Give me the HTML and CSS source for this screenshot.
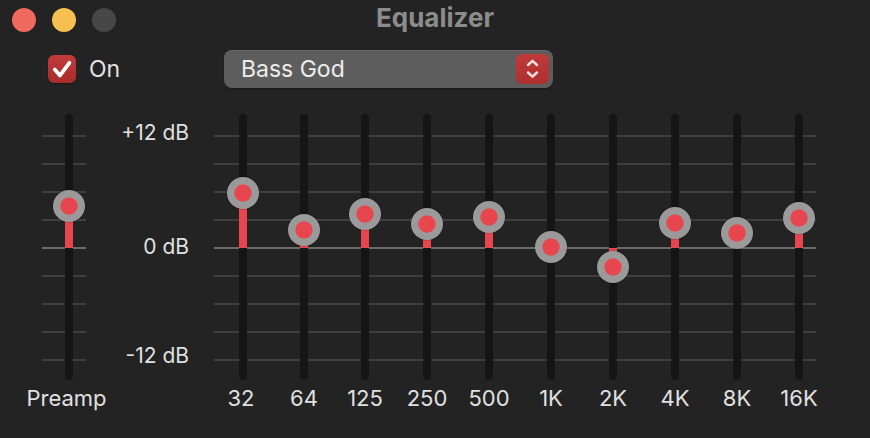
FILE: index.html
```html
<!DOCTYPE html>
<html lang="en">
<head>
<meta charset="utf-8">
<title>Equalizer</title>
<link rel="stylesheet" href="styles.css">
</head>
<body>
<div class="window">
  <header class="titlebar">
    <div class="lights">
      <span class="light close"></span>
      <span class="light min"></span>
      <span class="light zoom"></span>
    </div>
    <div class="title">Equalizer</div>
    <div class="spacer"></div>
  </header>

  <div class="controls">
    <label class="toggle">
      <span class="check">
        <svg width="28" height="28" viewBox="0 0 28 28"><path d="M6.8 14.6 L12 20.4 L21.4 7.8" fill="none" stroke="#fff" stroke-width="3.8" stroke-linecap="round" stroke-linejoin="round"/></svg>
      </span>
      <span>On</span>
    </label>
    <div class="popup">
      <span class="preset">Bass God</span>
      <span class="stepper">
        <svg width="33" height="30" viewBox="0 0 33 30"><path d="M12 11 L16.5 6.8 L21 11 M12 18.5 L16.5 22.7 L21 18.5" fill="none" stroke="#f4e2e2" stroke-width="2.4" stroke-linecap="round" stroke-linejoin="round"/></svg>
      </span>
    </div>
  </div>

  <div class="eq">
    <div class="band preamp">
      <div class="slider" style="--db:4.45"><div class="fill"></div><div class="knob"></div></div>
      <div class="label">Preamp</div>
    </div>
    <div class="scale">
      <span class="db top">+12 dB</span>
      <span class="db mid">0 dB</span>
      <span class="db bot">-12 dB</span>
    </div>
    <div class="bands">
      <div class="band first"><div class="slider" style="--db:5.9"><div class="fill"></div><div class="knob"></div></div><div class="label">32</div></div>
      <div class="band second"><div class="slider" style="--db:1.93"><div class="fill"></div><div class="knob"></div></div><div class="label">64</div></div>
      <div class="band"><div class="slider" style="--db:3.64"><div class="fill"></div><div class="knob"></div></div><div class="label">125</div></div>
      <div class="band"><div class="slider" style="--db:2.57"><div class="fill"></div><div class="knob"></div></div><div class="label">250</div></div>
      <div class="band"><div class="slider" style="--db:3.27"><div class="fill"></div><div class="knob"></div></div><div class="label">500</div></div>
      <div class="band"><div class="slider" style="--db:0.16"><div class="fill"></div><div class="knob"></div></div><div class="label">1K</div></div>
      <div class="band"><div class="slider" style="--db:-2.04"><div class="fill"></div><div class="knob"></div></div><div class="label">2K</div></div>
      <div class="band"><div class="slider" style="--db:2.68"><div class="fill"></div><div class="knob"></div></div><div class="label">4K</div></div>
      <div class="band"><div class="slider" style="--db:1.61"><div class="fill"></div><div class="knob"></div></div><div class="label">8K</div></div>
      <div class="band"><div class="slider" style="--db:3.21"><div class="fill"></div><div class="knob"></div></div><div class="label">16K</div></div>
    </div>
  </div>
</div>
</body>
</html>
```

FILE: styles.css
```css
* { box-sizing: border-box; }
html, body { margin: 0; padding: 0; }
body {
  background: #232323;
  font-family: Inter, "Noto Sans", sans-serif;
  color: #e0e0e0;
}
.window {
  width: 870px;
  height: 438px;
  background: #232323;
  overflow: hidden;
}

/* title bar */
.titlebar {
  height: 40px;
  display: grid;
  grid-template-columns: 1fr auto 1fr;
  align-items: center;
  padding: 0 12px;
}
.lights { display: flex; gap: 16px; }
.light { width: 24px; height: 24px; border-radius: 50%; }
.close { background: #ee6a5f; }
.min { background: #f5c04f; }
.zoom { background: #474747; }
.title {
  font-size: 26px;
  font-weight: 700;
  color: #8c8c8c;
  line-height: 36px;
  margin-top: -4px;
}

/* controls row */
.controls {
  display: flex;
  align-items: center;
  height: 38px;
  margin-top: 10px;
  padding-left: 48px;
}
.toggle {
  display: flex;
  align-items: center;
  gap: 13px;
  width: 176px;
  font-size: 23px;
  color: #e2e2e2;
}
.check {
  width: 28px;
  height: 28px;
  border-radius: 6px;
  background: linear-gradient(#c23b3b, #a82c2d);
  box-shadow: 0 1px 1px rgba(0,0,0,0.35);
  display: flex;
}
.popup {
  width: 329px;
  height: 38px;
  border-radius: 8px;
  background: #5d5d5d;
  box-shadow: inset 0 1px 0 rgba(255,255,255,0.08), 0 1px 1px rgba(0,0,0,0.35);
  display: flex;
  align-items: center;
  justify-content: space-between;
  padding: 0 4px 0 17px;
  font-size: 23px;
  color: #ededed;
}
.stepper {
  width: 33px;
  height: 30px;
  border-radius: 6px;
  background: linear-gradient(#c03a3a, #ae2f30);
  display: flex;
}

/* equalizer */
.eq {
  display: flex;
  margin-top: 26px;
  padding-left: 42px;
}
.band {
  display: flex;
  flex-direction: column;
  align-items: center;
  width: 62px;
}
.band.first { width: 64px; padding-left: 2px; }
.band.second { width: 60px; }
.band.first .label { margin-left: -4px; }
.preamp,
.bands {
  background-image:
    linear-gradient(to bottom, transparent 133px, #6b6b6b 133px, #6b6b6b 135px, transparent 135px),
    repeating-linear-gradient(to bottom, transparent 0 21px, #3f3f3f 21px 23px, transparent 23px 28px);
  background-repeat: no-repeat;
}
.preamp {
  width: 54px;
  background-size: 44px 266px;
  background-position: 0 0;
}
.preamp .label { padding-right: 5px; }
.bands {
  display: flex;
  margin-left: 21px;
  background-size: 602px 266px;
  background-position: 4px 0;
}
.scale {
  width: 93px;
  height: 266px;
  display: flex;
  flex-direction: column;
  align-items: flex-end;
  font-size: 21px;
  line-height: 24px;
  color: #e0e0e0;
}
.db.top { margin-top: 7px; }
.db.mid { margin-top: 90px; }
.db.bot { margin-top: 85px; }

.slider {
  position: relative;
  width: 8px;
  height: 266px;
  border-radius: 4px;
  background: #151515;
}
.fill {
  position: absolute;
  left: 0;
  width: 8px;
  top: calc(134px - max(var(--db), 0) * 9.333px);
  height: calc((max(var(--db), 0) - min(var(--db), 0)) * 9.333px);
  background: #e8464f;
}
.knob {
  position: absolute;
  width: 32px;
  height: 32px;
  left: -12px;
  top: calc(118px - var(--db) * 9.333px);
  border-radius: 50%;
  background: radial-gradient(circle, #e8464f 0 8.2px, #9a9a9a 9px);
  box-shadow: 0 0 0 0.5px rgba(0,0,0,0.3);
}
.label {
  margin-top: 6px;
  font-size: 22px;
  line-height: 24px;
  white-space: nowrap;
  color: #e0e0e0;
}
```
